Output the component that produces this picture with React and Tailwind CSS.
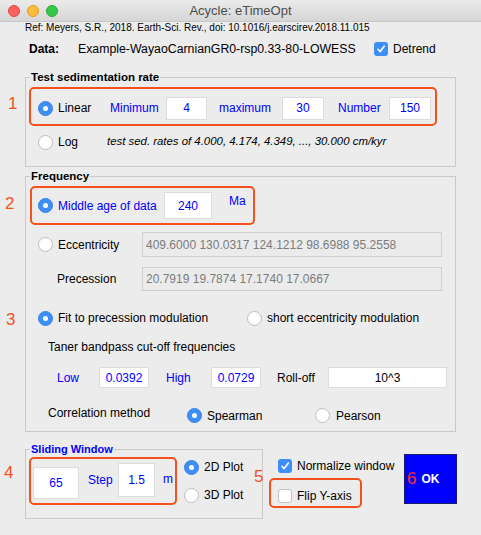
import React from 'react';

function Radio({ on }) {
  if (on) {
    return (
      <span className="w-[15px] h-[15px] rounded-full bg-[#3d8ef7] border border-[#3a82e6] flex items-center justify-center shrink-0">
        <span className="block w-[5px] h-[5px] rounded-full bg-white" />
      </span>
    );
  }
  return <span className="block w-[15px] h-[15px] rounded-full bg-white border border-[#bdbdbd] shrink-0" />;
}

function Check({ on }) {
  if (on) {
    return (
      <span className="w-[14px] h-[14px] rounded-[3px] bg-[#3d8ef7] flex items-center justify-center shrink-0">
        <svg width="10" height="10" viewBox="0 0 10 10">
          <path d="M2 5.3 L4.2 7.6 L8.2 2.2" stroke="white" strokeWidth="1.6" fill="none" strokeLinecap="round" strokeLinejoin="round" />
        </svg>
      </span>
    );
  }
  return <span className="block w-[14px] h-[14px] rounded-[3px] bg-white border border-[#c4c4c4] shrink-0" />;
}

function Box({ w, h, children, dark }) {
  return (
    <div
      className={`${w} ${h} bg-white border border-[#dcdcdc] flex items-center justify-center shrink-0 ${dark ? 'text-black' : 'text-[#0000ff]'}`}
    >
      {children}
    </div>
  );
}

export default function App() {
  return (
    <div className="relative w-[481px] h-[535px] bg-[#ececec] overflow-hidden font-['Liberation_Sans',Arial,sans-serif] text-[12px] leading-[14px] text-black">
      {/* title bar */}
      <div className="h-[22px] flex items-center bg-linear-to-b from-[#ebebeb] to-[#d6d6d6] border-b border-[#c8c8c8]">
        <div className="w-[66px] flex items-center gap-[7px] pl-[8px]">
          <span className="w-[12px] h-[12px] rounded-full bg-[#fc605c] border border-[#e2463f]" />
          <span className="w-[12px] h-[12px] rounded-full bg-[#fdbc40] border border-[#e1a116]" />
          <span className="w-[12px] h-[12px] rounded-full bg-[#34c84a] border border-[#2dac2f]" />
        </div>
        <div className="flex-1 text-center text-[13px] text-[#4d4d4d]">Acycle: eTimeOpt</div>
        <div className="w-[66px]" />
      </div>

      <div className="pl-[25px] h-[11px] text-[10px] leading-[11px]">
        Ref: Meyers, S.R., 2018. Earth-Sci. Rev., doi: 10.1016/j.earscirev.2018.11.015
      </div>

      <div className="mt-[6px] h-[20px] flex items-center">
        <span className="ml-[29px] w-[49px] font-bold">Data:</span>
        <span className="w-[296px] text-[12.3px]">Example-WayaoCarnianGR0-rsp0.33-80-LOWESS</span>
        <Check on />
        <span className="ml-[5px]">Detrend</span>
      </div>

      {/* test sedimentation rate */}
      <fieldset className="ml-[25px] mt-[11px] w-[431px] h-[97px] border border-[#c9c9c9]">
        <legend className="ml-[4px] px-[1px] font-bold text-[11.5px] leading-[14px]">Test sedimentation rate</legend>
        <div className="mt-[3px] ml-[3px] w-[408px] h-[39px] border-2 border-[#f4511e] rounded-[5px] flex items-center pt-[3px]">
          <span className="ml-[7px]"><Radio on /></span>
          <span className="ml-[5px] w-[52px]">Linear</span>
          <span className="w-[56px] text-[#0000ff]">Minimum</span>
          <Box w="w-[41px]" h="h-[23px]">4</Box>
          <span className="ml-[12px] w-[63px] text-[#0000ff]">maximum</span>
          <Box w="w-[42px]" h="h-[23px]">30</Box>
          <span className="ml-[14px] w-[51px] text-[#0000ff]">Number</span>
          <Box w="w-[42px]" h="h-[23px]">150</Box>
        </div>
        <div className="mt-[6px] h-[20px] flex items-center">
          <span className="ml-[12px]"><Radio /></span>
          <span className="ml-[5px] w-[49px]">Log</span>
          <span className="italic text-[11.4px] mb-[2px]">test sed. rates of 4.000, 4.174, 4.349, ..., 30.000 cm/kyr</span>
        </div>
      </fieldset>

      {/* frequency */}
      <fieldset className="ml-[25px] mt-[2px] w-[431px] h-[263px] border border-[#c9c9c9]">
        <legend className="ml-[4px] px-[1px] font-bold text-[11.5px] leading-[14px]">Frequency</legend>
        <div className="mt-[3px] ml-[4px] w-[225px] h-[39px] border-2 border-[#f4511e] rounded-[5px] flex items-center">
          <span className="ml-[6px]"><Radio on /></span>
          <span className="ml-[5px] w-[106px] text-[#0000ff]">Middle age of data</span>
          <Box w="w-[48px]" h="h-[27px]">240</Box>
          <span className="ml-[17px] mb-[10px] text-[#0000ff]">Ma</span>
        </div>
        <div className="mt-[7px] h-[25px] flex items-center">
          <span className="ml-[12px]"><Radio /></span>
          <span className="ml-[5px] w-[84px]">Eccentricity</span>
          <div className="w-[300px] h-[25px] bg-[#ebebeb] border border-[#cfcfcf] text-[#7b7b7b] pl-[3px] flex items-center">
            409.6000 130.0317 124.1212 98.6988 95.2558
          </div>
        </div>
        <div className="mt-[10px] h-[24px] flex items-center">
          <span className="ml-[31px] w-[85px]">Precession</span>
          <div className="w-[300px] h-[24px] bg-[#ebebeb] border border-[#cfcfcf] text-[#7b7b7b] pl-[3px] flex items-center">
            20.7919 19.7874 17.1740 17.0667
          </div>
        </div>
        <div className="mt-[17px] h-[20px] flex items-center">
          <span className="ml-[12px]"><Radio on /></span>
          <span className="ml-[5px] w-[189px]">Fit to precession modulation</span>
          <Radio />
          <span className="ml-[5px]">short eccentricity modulation</span>
        </div>
        <div className="mt-[11px] h-[16px] flex items-center">
          <span className="ml-[22px]">Taner bandpass cut-off frequencies</span>
        </div>
        <div className="mt-[12px] h-[21px] flex items-center">
          <span className="ml-[31px] w-[42px] text-[#0000ff]">Low</span>
          <Box w="w-[50px]" h="h-[21px]">0.0392</Box>
          <span className="ml-[17px] w-[45px] text-[#0000ff]">High</span>
          <Box w="w-[50px]" h="h-[21px]">0.0729</Box>
          <span className="ml-[16px] w-[51px]">Roll-off</span>
          <Box w="w-[119px]" h="h-[21px]" dark>10^3</Box>
        </div>
        <div className="mt-[16px] h-[20px] flex items-center">
          <span className="ml-[22px] w-[139px] mb-[3px]">Correlation method</span>
          <span className="mt-[3px]"><Radio on /></span>
          <span className="ml-[5px] w-[108px] mt-[3px]">Spearman</span>
          <span className="mt-[3px]"><Radio /></span>
          <span className="ml-[6px] mt-[3px]">Pearson</span>
        </div>
      </fieldset>

      {/* bottom */}
      <div className="mt-[10px] flex items-start pr-[24px]">
        <fieldset className="ml-[25px] w-[238px] h-[77px] border border-[#c9c9c9] shrink-0">
          <legend className="ml-[4px] px-[1px] font-bold text-[11px] leading-[14px] text-[#0000ff]">Sliding Window</legend>
          <div className="flex items-start">
            <div className="mt-[1px] ml-[3px] w-[148px] h-[48px] border-2 border-[#f4511e] rounded-[5px] flex items-start text-[#0000ff]">
              <div className="ml-[2px] mt-[8px]"><Box w="w-[46px]" h="h-[32px]">65</Box></div>
              <span className="ml-[9px] mt-[14px] w-[30px]">Step</span>
              <div className="mt-[4px]"><Box w="w-[37px]" h="h-[34px]">1.5</Box></div>
              <span className="ml-[8px] mt-[13px]">m</span>
            </div>
            <div className="ml-[7px] mt-[3px] flex flex-col gap-[12px]">
              <div className="h-[16px] flex items-center">
                <Radio on />
                <span className="ml-[5px]">2D Plot</span>
              </div>
              <div className="h-[16px] flex items-center">
                <Radio />
                <span className="ml-[5px]">3D Plot</span>
              </div>
            </div>
          </div>
        </fieldset>
        <div className="flex flex-col mt-[17px]">
          <div className="ml-[15px] h-[14px] flex items-center">
            <Check on />
            <span className="ml-[5px]">Normalize window</span>
          </div>
          <div className="ml-[6px] mt-[5px] w-[93px] h-[30px] border-2 border-[#f4511e] rounded-[5px] flex items-center pt-[6px]">
            <span className="ml-[7px]"><Check /></span>
            <span className="ml-[5px]">Flip Y-axis</span>
          </div>
        </div>
        <div className="ml-auto mt-[12px] w-[53px] h-[50px] bg-[#0000ff] border border-[#1b1b6b] flex items-center">
          <span className="ml-[2px] text-[17px] text-[#ff2a2a]">6</span>
          <span className="ml-[5px] font-bold text-white">OK</span>
        </div>
      </div>

      {/* annotation numbers */}
      <span className="absolute left-[8px] top-[94px] text-[17px] leading-[20px] text-[#f4511e]">1</span>
      <span className="absolute left-[5px] top-[194px] text-[17px] leading-[20px] text-[#f4511e]">2</span>
      <span className="absolute left-[6px] top-[310px] text-[17px] leading-[20px] text-[#f4511e]">3</span>
      <span className="absolute left-[4px] top-[463px] text-[17px] leading-[20px] text-[#f4511e]">4</span>
      <span className="absolute left-[254px] top-[467px] text-[17px] leading-[20px] text-[#f4511e]">5</span>
    </div>
  );
}
